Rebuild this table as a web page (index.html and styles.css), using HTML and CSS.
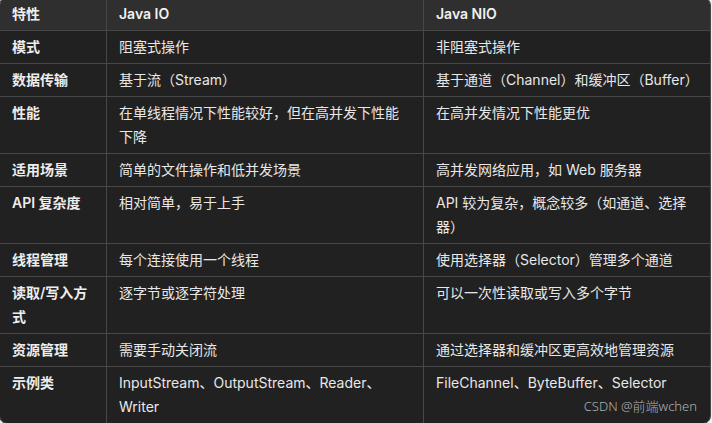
FILE: index.html
```html
<!DOCTYPE html>
<html lang="zh">
<head>
<meta charset="utf-8">
<link rel="stylesheet" href="styles.css">
</head>
<body>
<div class="frame">
  <div class="grid">
    <div class="cell head">特性</div>
    <div class="cell head">Java IO</div>
    <div class="cell head">Java NIO</div>

    <div class="cell label">模式</div>
    <div class="cell">阻塞式操作</div>
    <div class="cell">非阻塞式操作</div>

    <div class="cell label">数据传输</div>
    <div class="cell">基于流（Stream）</div>
    <div class="cell">基于通道（Channel）和缓冲区（Buffer）</div>

    <div class="cell label">性能</div>
    <div class="cell">在单线程情况下性能较好，但在高并发下性能下降</div>
    <div class="cell">在高并发情况下性能更优</div>

    <div class="cell label">适用场景</div>
    <div class="cell">简单的文件操作和低并发场景</div>
    <div class="cell">高并发网络应用，如 Web 服务器</div>

    <div class="cell label">API 复杂度</div>
    <div class="cell">相对简单，易于上手</div>
    <div class="cell">API 较为复杂，概念较多（如通道、选择器）</div>

    <div class="cell label">线程管理</div>
    <div class="cell">每个连接使用一个线程</div>
    <div class="cell">使用选择器（Selector）管理多个通道</div>

    <div class="cell label">读取/写入方式</div>
    <div class="cell">逐字节或逐字符处理</div>
    <div class="cell">可以一次性读取或写入多个字节</div>

    <div class="cell label">资源管理</div>
    <div class="cell">需要手动关闭流</div>
    <div class="cell">通过选择器和缓冲区更高效地管理资源</div>

    <div class="cell label">示例类</div>
    <div class="cell">InputStream、OutputStream、Reader、Writer</div>
    <div class="cell">FileChannel、ByteBuffer、Selector</div>
  </div>
  <div class="mark">CSDN @前端wchen</div>
</div>
</body>
</html>
```

FILE: styles.css
```css
html, body {
  margin: 0;
  padding: 0;
  background: #efefef;
  overflow: hidden;
}

body {
  width: 712px;
  height: 423px;
  font-family: "Inter", "Noto Sans CJK SC", sans-serif;
  font-size: 14px;
  line-height: 24px;
}

.frame {
  position: relative;
  width: 710px;
  height: 425px;
  margin: -3px 0 0 -1px;
  border: 1px solid #474747;
  border-radius: 8px;
  overflow: hidden;
  background: #474747;
}

.grid {
  display: grid;
  grid-template-columns: 106px 316px 1fr;
  gap: 1px;
  background: #474747;
}

.cell {
  background: #212121;
  color: #e8e8e8;
  padding: 4px 11px 4px 12px;
  min-height: 24px;
}

.head {
  background: #2f2f2f;
  color: #f0f0f0;
  font-weight: 600;
}

.label {
  font-weight: 600;
  color: #ededed;
}

.mark {
  position: absolute;
  right: 13px;
  bottom: 7px;
  color: #c8c8c8;
  font-family: "Noto Sans", "Noto Sans CJK SC", sans-serif;
  font-size: 13px;
  font-weight: 300;
  line-height: 20px;
  opacity: 0.85;
}
```
